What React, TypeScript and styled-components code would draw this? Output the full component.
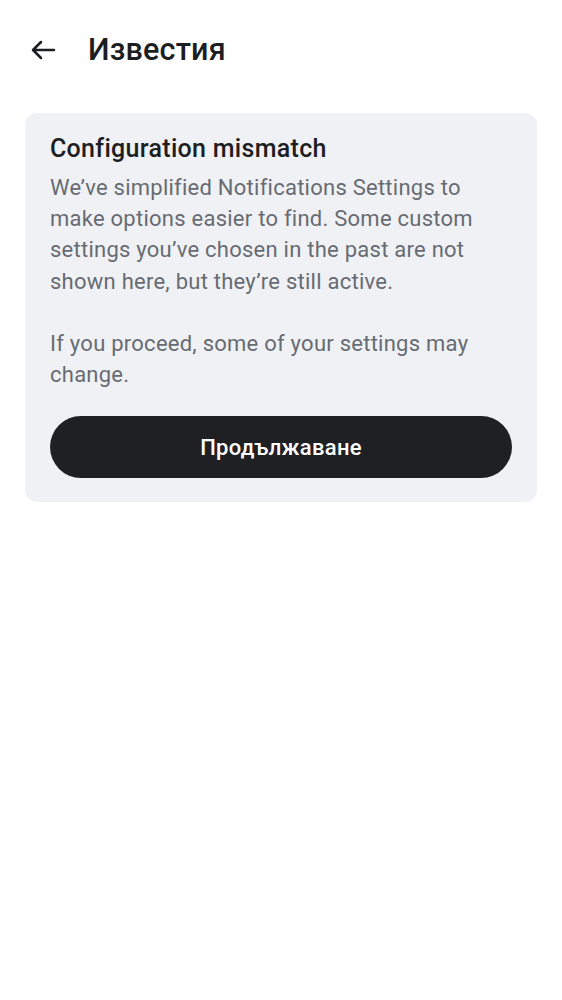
import React from "react";
import styled, { createGlobalStyle } from "styled-components";

const Global = createGlobalStyle`
  html, body { margin: 0; padding: 0; background: #ffffff; }
  body { font-family: Roboto, "Noto Sans", sans-serif; -webkit-font-smoothing: antialiased; }
  * { box-sizing: border-box; }
`;

const Page = styled.div`
  width: 562px;
  min-height: 1000px;
  background: #ffffff;
  display: flex;
  flex-direction: column;
`;

const Header = styled.header`
  height: 100px;
  display: flex;
  align-items: center;
  padding: 0 0 0 28px;
  gap: 30px;
`;

const BackButton = styled.button`
  width: 30px;
  height: 30px;
  border: none;
  background: none;
  padding: 0;
  display: flex;
  align-items: center;
  justify-content: center;
  color: #1d1e22;
`;

const Title = styled.h1`
  margin: 0;
  font-size: 30.5px;
  font-weight: 500;
  color: #1d1e22;
  line-height: 36px;
  letter-spacing: 0.2px;
`;

const Card = styled.section`
  margin: 13px 25px 0;
  background: #f0f1f5;
  border-radius: 12px;
  padding: 21px 25px 24px;
  display: flex;
  flex-direction: column;
`;

const CardTitle = styled.h2`
  margin: 0;
  font-size: 25px;
  font-weight: 500;
  color: #1d1e22;
  line-height: 30px;
  letter-spacing: 0.3px;
`;

const Body = styled.p<{ $gap?: number }>`
  margin: ${(p) => p.$gap ?? 0}px 0 0;
  font-size: 22px;
  line-height: 31.2px;
  letter-spacing: 0.25px;
  color: #676b72;
  font-weight: 400;
`;

const PrimaryButton = styled.button`
  margin-top: 26px;
  height: 62px;
  width: 100%;
  border: none;
  border-radius: 31px;
  background: #1f2024;
  color: #ffffff;
  font-family: Roboto, "Noto Sans", sans-serif;
  font-size: 22px;
  font-weight: 500;
  letter-spacing: 0.3px;
`;

export default function App() {
  return (
    <>
      <Global />
      <Page>
        <Header>
          <BackButton aria-label="Back">
            <svg width="26" height="26" viewBox="0 0 26 26" fill="none">
              <path d="M24 13H3.5M11 5l-8 8 8 8" stroke="currentColor" strokeWidth="2.5" strokeLinecap="round" strokeLinejoin="round" />
            </svg>
          </BackButton>
          <Title>Известия</Title>
        </Header>
        <Card>
          <CardTitle>Configuration mismatch</CardTitle>
          <Body $gap={8}>
            We’ve simplified Notifications Settings to make options easier to find. Some custom settings you’ve chosen in the past are not shown here, but they’re still active.
          </Body>
          <Body $gap={31}>If you proceed, some of your settings may change.</Body>
          <PrimaryButton>Продължаване</PrimaryButton>
        </Card>
      </Page>
    </>
  );
}
